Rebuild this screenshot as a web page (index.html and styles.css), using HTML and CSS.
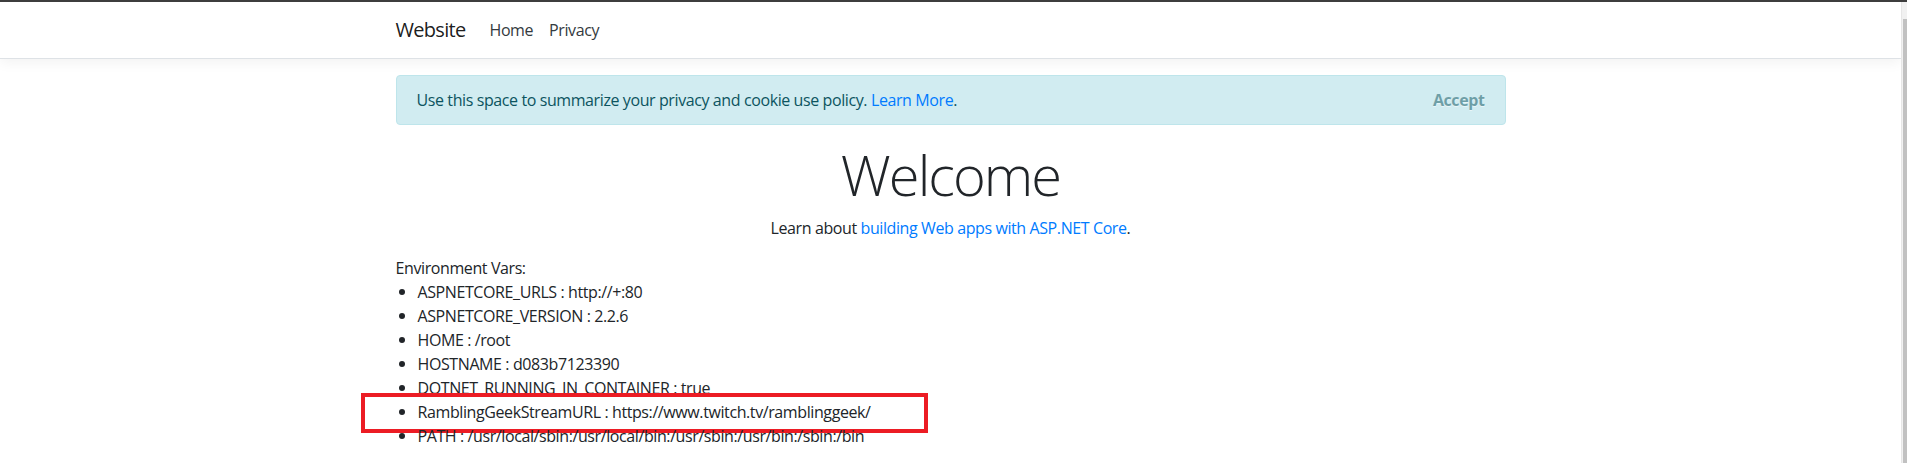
FILE: index.html
```html
<!DOCTYPE html>
<html lang="en">
<head>
<meta charset="utf-8">
<title>Home Page - Website</title>
<link rel="stylesheet" href="styles.css">
</head>
<body>
<div class="frame">
  <div class="viewport">
    <header class="navbar">
      <div class="container nav-inner">
        <a class="brand" href="#">Website</a>
        <nav class="nav-links">
          <a class="nav-link" href="#">Home</a>
          <a class="nav-link" href="#">Privacy</a>
        </nav>
      </div>
    </header>
    <div class="container">
      <div class="alert">
        <span>Use this space to summarize your privacy and cookie use policy. <a class="link" href="#">Learn More</a>.</span>
        <button type="button" class="accept">Accept</button>
      </div>
      <main class="main">
        <div class="intro">
          <h1 class="display">Welcome</h1>
          <p class="lead-line">Learn about <a class="link" href="#">building Web apps with ASP.NET Core</a>.</p>
        </div>
        <div class="env">
          <div class="env-title">Environment Vars:</div>
          <ul class="env-list">
            <li>ASPNETCORE_URLS : http://+:80</li>
            <li>ASPNETCORE_VERSION : 2.2.6</li>
            <li>HOME : /root</li>
            <li>HOSTNAME : d083b7123390</li>
            <li>DOTNET_RUNNING_IN_CONTAINER : true</li>
            <li class="marked">RamblingGeekStreamURL : https://www.twitch.tv/ramblinggeek/<span class="annot"></span></li>
            <li>PATH : /usr/local/sbin:/usr/local/bin:/usr/sbin:/usr/bin:/sbin:/bin</li>
          </ul>
        </div>
      </main>
    </div>
  </div>
  <div class="scrollbar">
    <div class="scroll-arrow"></div>
    <div class="scroll-thumb"></div>
  </div>
</div>
</body>
</html>
```

FILE: styles.css
```css
html, body {
  margin: 0;
  padding: 0;
  height: 100%;
}

body {
  font-family: "Open Sans", "Noto Sans", Arial, sans-serif;
  font-size: 16px;
  line-height: 1.5;
  letter-spacing: -0.025em;
  color: #212529;
  background: #fff;
}

.frame {
  display: flex;
  height: 100vh;
  border-top: 2px solid #3d3d3d;
  box-sizing: border-box;
  overflow: hidden;
}

.viewport {
  flex: 1;
  min-width: 0;
}

.container {
  max-width: 1140px;
  margin: 0 auto;
  padding: 0 15px;
  box-sizing: border-box;
}

/* navbar */
.navbar {
  background: #fff;
  border-bottom: 1px solid #dee2e6;
  box-shadow: 0 4px 12px rgba(0, 0, 0, 0.05);
  padding: 8px 16px;
  margin-bottom: 16px;
}

.nav-inner {
  display: flex;
  align-items: center;
}

.brand {
  font-size: 20px;
  line-height: 30px;
  padding: 5px 0;
  margin-right: 16px;
  letter-spacing: -0.035em;
  color: rgba(0, 0, 0, 0.9);
  text-decoration: none;
}

.nav-links {
  display: flex;
}

.nav-link {
  padding: 8px;
  color: #343a40;
  text-decoration: none;
  font-size: 16px;
  line-height: 24px;
}

/* cookie alert */
.alert {
  display: flex;
  justify-content: space-between;
  align-items: center;
  padding: 12px 20px;
  border: 1px solid #bee5eb;
  border-radius: 4px;
  background: #d1ecf1;
  color: #0c5460;
  margin-bottom: 16px;
}

.link {
  color: #007bff;
  text-decoration: none;
}

.accept {
  font-family: inherit;
  font-size: 16px;
  line-height: 24px;
  font-weight: 700;
  letter-spacing: inherit;
  padding: 0;
  border: 0;
  background: transparent;
  color: #0c5460;
  opacity: 0.5;
  text-shadow: 0 1px 0 #fff;
  cursor: pointer;
}

/* main */
.intro {
  text-align: center;
}

.display {
  font-size: 56px;
  font-weight: 300;
  line-height: 1.2;
  letter-spacing: -0.035em;
  margin: 0 0 8px;
}

.lead-line {
  margin: 0 0 16px;
}

.env-list {
  list-style: none;
  margin: 0;
  padding: 0;
}

.env-list li {
  display: flex;
  align-items: center;
  position: relative;
}

.env-list li::before {
  content: "";
  width: 6px;
  height: 6px;
  border-radius: 50%;
  background: #212529;
  margin-left: 3px;
  margin-right: 13px;
  flex: none;
}

.annot {
  position: absolute;
  left: -35px;
  top: -7px;
  width: 567px;
  height: 40px;
  border: 4px solid #ec1c24;
  box-sizing: border-box;
  pointer-events: none;
}

/* fake scrollbar */
.scrollbar {
  width: 6px;
  flex: none;
  display: flex;
  flex-direction: column;
  background: #f1f1f1;
  border-left: 1px solid #e6e6e6;
  box-sizing: border-box;
}

.scroll-arrow {
  height: 17px;
}

.scroll-thumb {
  flex: 1;
  margin-left: 1px;
  background: #c1c1c1;
}
```
